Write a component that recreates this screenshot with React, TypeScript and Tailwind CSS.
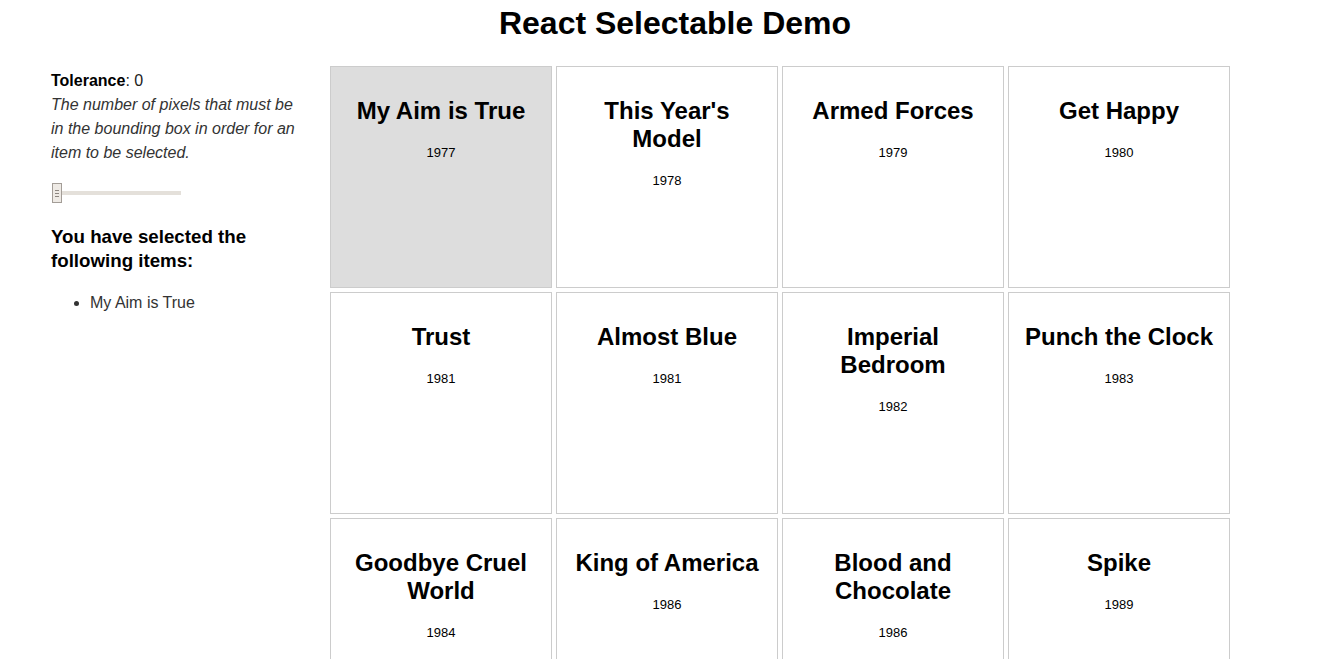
import { useState } from 'react';

interface Album {
  title: string;
  year: number;
}

const albums: Album[] = [
  { title: 'My Aim is True', year: 1977 },
  { title: "This Year's Model", year: 1978 },
  { title: 'Armed Forces', year: 1979 },
  { title: 'Get Happy', year: 1980 },
  { title: 'Trust', year: 1981 },
  { title: 'Almost Blue', year: 1981 },
  { title: 'Imperial Bedroom', year: 1982 },
  { title: 'Punch the Clock', year: 1983 },
  { title: 'Goodbye Cruel World', year: 1984 },
  { title: 'King of America', year: 1986 },
  { title: 'Blood and Chocolate', year: 1986 },
  { title: 'Spike', year: 1989 },
];

function ToleranceSlider({ value }: { value: number }) {
  return (
    <div className="relative mt-[18px] h-[20px] w-[130px]">
      <div className="absolute left-[1px] right-0 top-[8px] h-[4px] bg-[#e4e0da]" />
      <div
        className="absolute top-0 flex h-[20px] w-[10px] flex-col items-center justify-center gap-[2px] border border-[#a39d97] bg-[#eeeae5]"
        style={{ left: 1 + value }}
      >
        <span className="block h-px w-[4px] bg-[#8c8680]" />
        <span className="block h-px w-[4px] bg-[#8c8680]" />
        <span className="block h-px w-[4px] bg-[#8c8680]" />
      </div>
    </div>
  );
}

function AlbumCard({ album, selected }: { album: Album; selected: boolean }) {
  return (
    <div
      className={`h-[222px] w-[222px] border border-[#cccccc] px-[13px] pt-[30px] text-center ${
        selected ? 'bg-[#dddddd]' : 'bg-white'
      }`}
    >
      <h2 className="text-[24px] font-bold leading-[28px] text-black">{album.title}</h2>
      <p className="mt-[20px] text-[13px] leading-[15px] text-black">{album.year}</p>
    </div>
  );
}

export default function App() {
  const [tolerance] = useState(0);
  const [selected] = useState<string[]>(['My Aim is True']);

  return (
    <div className="min-h-screen bg-white font-['Liberation_Sans',Arial,sans-serif] text-black">
      <h1 className="pl-4 pt-[5px] text-center text-[32px] font-bold leading-[37px]">
        React Selectable Demo
      </h1>

      <div className="mt-[24px] flex items-start">
        <div className="ml-[51px] w-[248px] pt-[3px]">
          <p className="text-[16px] leading-[24px] text-[#222]">
            <span className="font-bold text-black">Tolerance</span>: {tolerance}
          </p>
          <p className="text-[16px] italic leading-[24px] text-[#333]">
            The number of pixels that must be in the bounding box in order for an item to be selected.
          </p>

          <ToleranceSlider value={tolerance} />

          <h3 className="mt-[22px] text-[18.72px] font-bold leading-[24px] text-black">
            You have selected the following items:
          </h3>
          <ul className="mt-[18px] list-disc pl-[39px] text-[16px] leading-[24px] text-[#333]">
            {selected.map((s) => (
              <li key={s}>{s}</li>
            ))}
          </ul>
        </div>

        <div className="ml-[31px] grid grid-cols-[repeat(4,222px)] gap-[4px]">
          {albums.map((a) => (
            <AlbumCard key={a.title} album={a} selected={selected.includes(a.title)} />
          ))}
        </div>
      </div>
    </div>
  );
}
